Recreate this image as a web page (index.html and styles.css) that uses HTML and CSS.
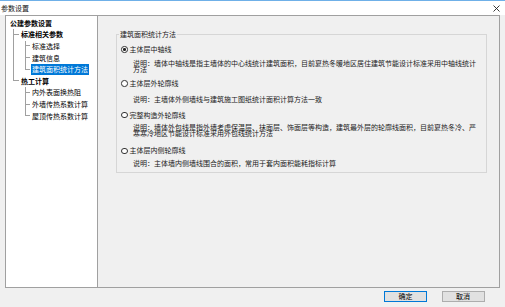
FILE: index.html
```html
<!DOCTYPE html>
<html lang="zh-CN">
<head>
<meta charset="utf-8">
<title>参数设置</title>
<link rel="stylesheet" href="styles.css">
</head>
<body>
<div class="titlebar">
  <span class="title">参数设置</span>
  <svg class="close" width="7" height="7" viewBox="0 0 7 7"><path d="M0.5 0.5L6.5 6.5M6.5 0.5L0.5 6.5" stroke="#222" stroke-width="0.9" fill="none"/></svg>
</div>
<div class="main">
  <div class="tree">
    <div class="row root"><span class="lbl bold">公建参数设置</span></div>
    <div class="row l1"><span class="conn"><i class="ct"></i><i class="cb"></i></span><span class="lbl bold">标准相关参数</span></div>
    <div class="row l2"><span class="pipe on"></span><span class="conn"><i class="ct"></i><i class="cb"></i></span><span class="lbl">标准选择</span></div>
    <div class="row l2"><span class="pipe on"></span><span class="conn"><i class="ct"></i><i class="cb"></i></span><span class="lbl">建筑信息</span></div>
    <div class="row l2"><span class="pipe on"></span><span class="conn last"><i class="ct"></i><i class="cb"></i></span><span class="lbl sel">建筑面积统计方法</span></div>
    <div class="row l1"><span class="conn last"><i class="ct"></i><i class="cb"></i></span><span class="lbl bold">热工计算</span></div>
    <div class="row l2"><span class="pipe"></span><span class="conn"><i class="ct"></i><i class="cb"></i></span><span class="lbl">内外表面换热阻</span></div>
    <div class="row l2"><span class="pipe"></span><span class="conn"><i class="ct"></i><i class="cb"></i></span><span class="lbl">外墙传热系数计算</span></div>
    <div class="row l2"><span class="pipe"></span><span class="conn last"><i class="ct"></i><i class="cb"></i></span><span class="lbl">屋顶传热系数计算</span></div>
  </div>
  <div class="panel">
    <fieldset class="group">
      <legend>建筑面积统计方法</legend>
      <div class="lab o1"><span class="radio on"></span>主体层中轴线</div>
      <div class="desc d1">说明：墙体中轴线是指主墙体的中心线统计建筑面积，目前夏热冬暖地区居住建筑节能设计标准采用中轴线统计方法</div>
      <div class="lab o2"><span class="radio"></span>主体层外轮廓线</div>
      <div class="desc d2">说明：主墙体外侧墙线与建筑施工图纸统计面积计算方法一致</div>
      <div class="lab o3"><span class="radio"></span>完整构造外轮廓线</div>
      <div class="desc d3">说明：墙体外包线是指外墙考虑保温层、抹面层、饰面层等构造，建筑最外层的轮廓线面积，目前夏热冬冷、严寒寒冷地区节能设计标准采用外包线统计方法</div>
      <div class="lab o4"><span class="radio"></span>主体层内侧轮廓线</div>
      <div class="desc d4">说明：主体墙内侧墙线围合的面积，常用于套内面积能耗指标计算</div>
    </fieldset>
  </div>
</div>
<div class="footer">
  <button class="btn primary">确定</button>
  <button class="btn">取消</button>
</div>
</body>
</html>
```
FILE: styles.css
```css
* { box-sizing: border-box; margin: 0; padding: 0; }
html, body { width: 505px; height: 307px; overflow: hidden; }
body {
  background: #f0f0f0;
  font-family: "Noto Sans CJK SC", "Noto Sans", sans-serif;
  font-size: 7px;
  color: #000;
}
.titlebar {
  height: 15px;
  border-top: 1px solid #6fb0e8;
  background: #fff;
  display: flex;
  align-items: center;
  justify-content: space-between;
  padding: 0 5px 0 1px;
}
.title { line-height: 9px; color: #111; }
.close { display: block; }

.main {
  display: flex;
  width: 495px;
  height: 273px;
  margin-left: 5px;
  border: 1px solid #a0a0a0;
}
.tree {
  width: 92px;
  background: #fff;
  border-right: 1px solid #a0a0a0;
  padding-top: 1.3px;
}
.row {
  display: flex;
  align-items: center;
  height: 11.65px;
  white-space: nowrap;
}
.row.root { padding-left: 4px; }
.row.l1, .row.l2 { padding-left: 7px; }
.lbl { line-height: 11px; }
.bold { font-weight: bold; }
.conn {
  display: flex;
  flex-direction: column;
  align-self: stretch;
  width: 6px;
}
.l2 .conn { width: 5px; }
.conn .ct {
  height: 50%;
  border-left: 1px solid #a0a0a0;
  border-bottom: 1px solid #a0a0a0;
}
.conn .cb {
  flex: 1;
  border-left: 1px solid #a0a0a0;
}
.conn.last .cb { border-left-color: transparent; }
.l1 .lbl { margin-left: 2px; }
.pipe { align-self: stretch; width: 12px; }
.pipe.on { border-left: 1px solid #a0a0a0; }
.l2 .lbl { margin-left: 1px; padding: 0 1px; }
.lbl.sel { background: #0078d7; color: #fff; }

.panel {
  flex: 1;
  padding: 14.5px 0 0 18px;
}
.group {
  width: 371px;
  border: 1px solid #d6d6d6;
  padding: 7.6px 5px 6px 4px;
  color: #1a1a1a;
}
.group legend {
  margin-left: -2px;
  padding: 0 1px;
  line-height: 7px;
}
.lab {
  display: flex;
  align-items: center;
  height: 9px;
  line-height: 9px;
}
.radio {
  display: flex;
  align-items: center;
  justify-content: center;
  width: 6.5px;
  height: 6.5px;
  border: 1px solid #333;
  border-radius: 50%;
  background: #fff;
  margin-right: 2px;
}
.radio.on::after {
  content: "";
  width: 2.6px;
  height: 2.6px;
  border-radius: 50%;
  background: #222;
}
.desc {
  padding-left: 12px;
  line-height: 6.6px;
}
.d1 { margin-top: 5.6px; }
.o2 { margin-top: 6.2px; }
.d2 { margin-top: 8px; }
.o3 { margin-top: 8px; }
.d3 { margin-top: 4.2px; }
.o4 { margin-top: 9.4px; }
.d4 { margin-top: 4.4px; }

.footer {
  display: flex;
  justify-content: flex-end;
  gap: 14.5px;
  padding: 3px 20.5px 0 0;
}
.btn {
  width: 43px;
  height: 11px;
  border: 1px solid #adadad;
  background: #e1e1e1;
  font: inherit;
  line-height: 9px;
  text-align: center;
  color: #000;
}
.btn.primary { border-color: #0078d7; }
```
